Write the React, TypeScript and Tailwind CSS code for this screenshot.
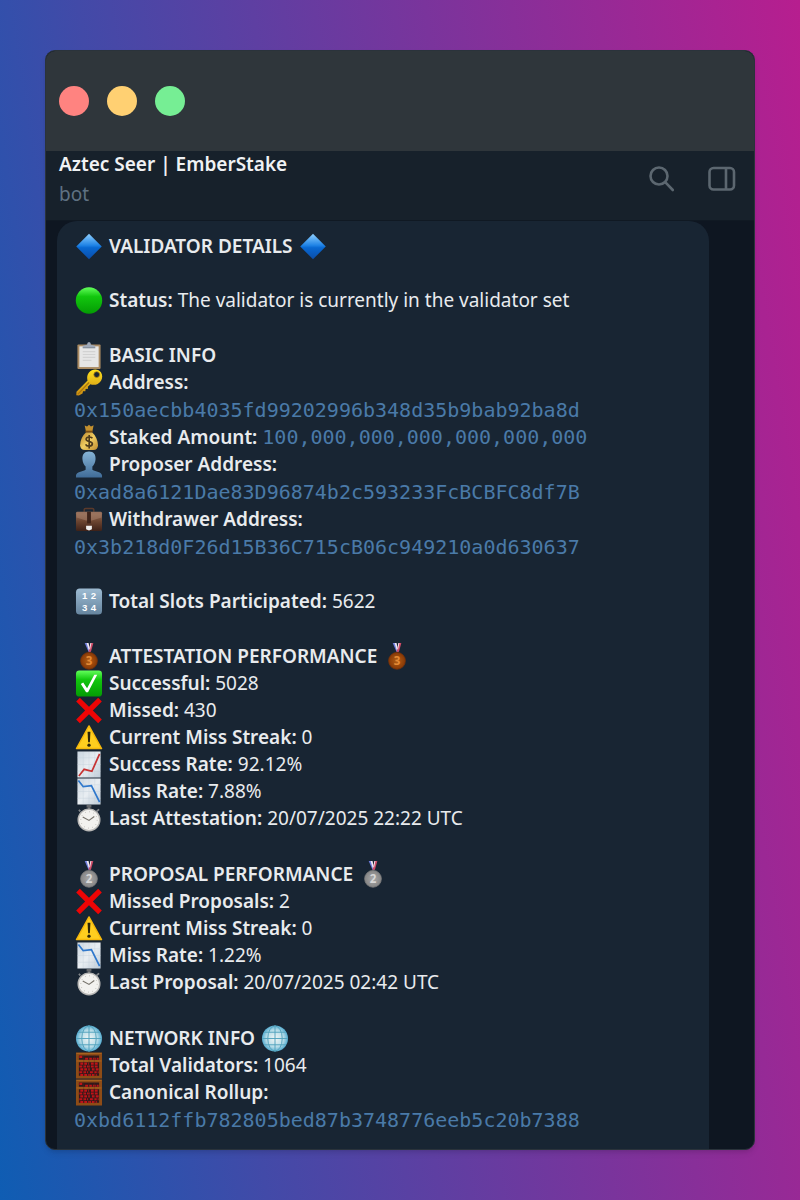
import type { ReactNode } from "react";

function IconDefs() {
  return (
    <svg className="absolute h-0 w-0" aria-hidden="true">
      <defs>
        <linearGradient id="blue" x1="0" y1="0" x2="0" y2="1">
          <stop offset="0" stopColor="#8fd0ff" />
          <stop offset="0.45" stopColor="#2084e6" />
          <stop offset="0.55" stopColor="#0868d2" />
          <stop offset="1" stopColor="#0b4da8" />
        </linearGradient>
        <linearGradient id="green" x1="0" y1="0" x2="0" y2="1">
          <stop offset="0" stopColor="#63ff5c" />
          <stop offset="0.35" stopColor="#12c70e" />
          <stop offset="1" stopColor="#049b04" />
        </linearGradient>
        <linearGradient id="gold" x1="0" y1="0" x2="0" y2="1">
          <stop offset="0" stopColor="#ffe21f" />
          <stop offset="1" stopColor="#c88a12" />
        </linearGradient>
        <linearGradient id="bag" x1="0" y1="0" x2="1" y2="1">
          <stop offset="0" stopColor="#b98228" />
          <stop offset="0.5" stopColor="#f0cd62" />
          <stop offset="1" stopColor="#c08c30" />
        </linearGradient>
        <linearGradient id="steel" x1="0" y1="0" x2="0" y2="1">
          <stop offset="0" stopColor="#86b4d6" />
          <stop offset="1" stopColor="#406c98" />
        </linearGradient>
        <linearGradient id="leather" x1="0" y1="0" x2="0" y2="1">
          <stop offset="0" stopColor="#9a7460" />
          <stop offset="0.5" stopColor="#6b4430" />
          <stop offset="1" stopColor="#3d2118" />
        </linearGradient>
        <linearGradient id="slate" x1="0" y1="0" x2="0" y2="1">
          <stop offset="0" stopColor="#9dbbd2" />
          <stop offset="1" stopColor="#66859f" />
        </linearGradient>
        <linearGradient id="paper" x1="0" y1="0" x2="1" y2="1">
          <stop offset="0" stopColor="#cbd6e0" />
          <stop offset="0.5" stopColor="#e9eef2" />
          <stop offset="1" stopColor="#bfccd8" />
        </linearGradient>
        <radialGradient id="bronze">
          <stop offset="0" stopColor="#b45f14" />
          <stop offset="1" stopColor="#873806" />
        </radialGradient>
        <radialGradient id="silver">
          <stop offset="0" stopColor="#aaaaaa" />
          <stop offset="1" stopColor="#858585" />
        </radialGradient>
        <radialGradient id="globe">
          <stop offset="0" stopColor="#f1f5f4" />
          <stop offset="0.65" stopColor="#b9dde8" />
          <stop offset="1" stopColor="#55acd0" />
        </radialGradient>
      </defs>
    </svg>
  );
}

function Icon({ children }: { children: ReactNode }) {
  return (
    <svg viewBox="0 0 28 28" className="h-[27px] w-7 shrink-0" aria-hidden="true">
      {children}
    </svg>
  );
}

const Diamond = () => (
  <Icon>
    <path d="M14 0.8 27.2 14 14 27.2 0.8 14Z" fill="url(#blue)" />
  </Icon>
);

const GreenDot = () => (
  <Icon>
    <circle cx="14" cy="14" r="13.7" fill="url(#green)" />
  </Icon>
);

const Clipboard = () => (
  <Icon>
    <rect x="2" y="2.5" width="24" height="25.5" rx="1" fill="#a98a62" />
    <rect x="4" y="4.5" width="20" height="21.5" fill="#e6e6e6" />
    <path d="M7.5 10h13M7.5 13h13M7.5 16h13M7.5 19h9" stroke="#d2d2d2" strokeWidth="1.2" />
    <path d="M7.5 6V3.8L12 2.8Q12 0 14 0T16 2.8L20.500 3.8V6Z" fill="#9fa9b8" />
    <path d="M7.500 6h13" stroke="#75808f" />
  </Icon>
);

const Key = () => (
  <Icon>
    <path
      d="M14 3.500C17-.5 24-.5 26.500 3.500S27.500 13.500 23 15.500C20.500 16.700 17.500 16.500 15.500 15.800L12.800 18.500 13 20.500 10.500 20.800 10.200 23 7.800 23.200 7.300 25.500 3.500 27.500 0.800 27.300 1 23.500 12.500 11.800C11.700 9 12 6 14 3.500Z"
      fill="url(#gold)"
    />
    <path d="M2.500 26 14 14" stroke="#a87410" strokeWidth="1.2" />
    <circle cx="22" cy="5.800" r="3" fill="#182533" stroke="#b68710" strokeWidth="0.800" />
  </Icon>
);

const MoneyBag = () => (
  <Icon>
    <path d="M9.500 1.500 12 2.500 14 .8 16 2.500 18.800 1.200 17.500 7.500H10.800Z" fill="#c4912f" />
    <path d="M11 8.500C7 12 4.800 17 4.800 22Q4.800 27 10 27H18.500Q23.300 27 23.300 22C23.300 17 21 12 17.200 8.500Z" fill="url(#bag)" />
    <path d="M10.300 7.800h7.500" stroke="#7b4d12" strokeWidth="1.800" />
    <path
      d="M17.500 14.800C16.500 13 11.200 12.700 11 15.700 11 18.500 17.500 17.500 17.500 20.600 17.300 23.800 11.500 23.500 10.500 21.200M14.200 11.500v14"
      fill="none"
      stroke="#4f3b1c"
      strokeWidth="1.700"
    />
  </Icon>
);

const Person = () => (
  <Icon>
    <path
      d="M14 .5C9 .5 6.800 4 7.200 8.500 7.400 12 8.800 14.500 10.500 16V19.500C7 21.500 1 21.500.5 25.500V27.500H27.500V25.500C27 21.500 21 21.500 17.500 19.500V16C19.200 14.500 20.600 12 20.800 8.500 21.200 4 19 .5 14 .5Z"
      fill="url(#steel)"
    />
  </Icon>
);

const Briefcase = () => (
  <Icon>
    <path d="M9 6V4Q9 2.500 10.500 2.500H17.500Q19 2.500 19 4V6" fill="none" stroke="#5b3a2b" strokeWidth="1.500" />
    <rect x="0.500" y="6" width="27" height="20" rx="1.500" fill="url(#leather)" />
    <path d="M1 7.500H27V12L17 15H11L1 12Z" fill="#a37c66" opacity="0.600" />
    <path d="M12 6h4v12h-4Z" fill="#3f241a" />
    <path d="M11 20.500h6V24L14 25.500 11 24Z" fill="#eeeeee" />
  </Icon>
);

const Numbers = () => (
  <Icon>
    <rect x="0.500" y="0.500" width="27" height="27" rx="4" fill="url(#slate)" />
    <g fill="#ffffff" fontFamily="'Liberation Sans', sans-serif" fontSize="10" fontWeight="700" textAnchor="middle">
      <text x="9.500" y="11">1</text>
      <text x="18.500" y="11">2</text>
      <text x="9.500" y="24">3</text>
      <text x="18.500" y="24">4</text>
    </g>
  </Icon>
);

function Medal({ place }: { place: 2 | 3 }) {
  const bronze = place === 3;
  return (
    <Icon>
      <path d="M9.500 0h3.500l2.500 9h-2Z" fill="#6f7ee0" />
      <path d="M11.500 0h2l1.500 7-1 1Z" fill="#f0e9f0" />
      <path d="M18.500 0h-3l-2 9h2.500Z" fill="#cf4c68" />
      <path d="M16.500 0h-1l-1.300 6 .8 1Z" fill="#f0e9f0" />
      <circle
        cx="14"
        cy="18.500"
        r="8.700"
        fill={bronze ? "url(#bronze)" : "url(#silver)"}
        stroke={bronze ? "#7a3206" : "#7d7d7d"}
        strokeWidth="0.800"
      />
      <text
        x="14"
        y="23"
        fontSize="12"
        fontWeight="700"
        textAnchor="middle"
        fontFamily="'Noto Sans', sans-serif"
        fill={bronze ? "#e58a35" : "#d8d8d8"}
      >
        {place}
      </text>
    </Icon>
  );
}

const Check = () => (
  <Icon>
    <rect x="0.500" y="0.500" width="27" height="27" rx="3.500" fill="url(#green)" />
    <path d="M5.500 14.500 8 13 12 19 19.500 4.800 22.500 4.800 13 23H11Z" fill="#ffffff" />
  </Icon>
);

const Cross = () => (
  <Icon>
    <path d="M4.500.8 14 10 23.500.8 27.300 4.600 18 14 27.300 23.400 23.500 27.200 14 18 4.500 27.200.7 23.400 10 14 .7 4.600Z" fill="#ee0505" />
  </Icon>
);

const Warning = () => (
  <Icon>
    <path d="M14 2 27 25.500H1Z" fill="#ffce1f" stroke="#f5b80c" strokeWidth="1.500" strokeLinejoin="round" />
    <path d="M12.500 8h3l-.6 11h-1.800Z" fill="#2b2508" />
    <circle cx="14" cy="22" r="1.700" fill="#2b2508" />
  </Icon>
);

function Chart({ up }: { up?: boolean }) {
  return (
    <Icon>
      <rect x="2" y="0.500" width="24" height="27" fill="url(#paper)" />
      <path d="M8 1v26M14 1v26M20 1v26M2 7h24M2 14h24M2 21h24" stroke="#c3cfda" strokeWidth="0.400" />
      <path
        d={up ? "M3.500 26 9 19 17 21 25 3" : "M3 2.500 8 9 16.500 8 25 25"}
        fill="none"
        stroke={up ? "#c73333" : "#2f78cc"}
        strokeWidth="1.800"
      />
    </Icon>
  );
}

const Stopwatch = () => (
  <Icon>
    <path d="M11.500 0h5v2.500h-1.200V5h-2.600V2.500h-1.200Z" fill="#65686c" />
    <path d="M22 6.500 24.500 4.500M5 6.500 3.500 5" stroke="#83878b" strokeWidth="1.800" />
    <circle cx="14" cy="15.500" r="11.200" fill="#f3f2ef" stroke="#b9b8b6" strokeWidth="1.500" />
    <circle cx="14" cy="15.500" r="8.500" fill="none" stroke="#aaa69f" strokeDasharray="0.700 3.750" />
    <path d="M7.500 12.500 14 16 19.500 12" fill="none" stroke="#77736b" strokeWidth="1.200" />
  </Icon>
);

const Globe = () => (
  <Icon>
    <circle cx="14" cy="14" r="13.500" fill="url(#globe)" />
    <g fill="none" stroke="#54a3bd" strokeWidth="1">
      <ellipse cx="14" cy="14" rx="7.500" ry="13" />
      <path d="M14 .5v27M.5 14h27M2.800 7.500h22.400M2.800 20.500h22.400" />
    </g>
  </Icon>
);

const Abacus = () => (
  <Icon>
    <rect x="0.500" y="0.500" width="27" height="27" fill="#8e4c16" />
    <path d="M3.500 3.500h21v4.500h-21ZM3.500 10.500h21v14h-21Z" fill="#30191b" />
    <g stroke="#c01218" strokeWidth="2.200" strokeDasharray="3 1">
      <path d="M4 5h4M10 7h14M5 12h9M16 12h7M4 15h20M5 18h10M17 18h7M4 21h9M15 21h9M5 23.800h17" />
    </g>
    <path d="M8.500 4v21M14 4v21M19.500 4v21" stroke="#4c2118" strokeWidth="0.700" />
    <path d="M1 1.500h26M1 9.300h26" stroke="#aa6420" />
  </Icon>
);

function Heading({ icon, trailing, children }: { icon: ReactNode; trailing?: ReactNode; children: ReactNode }) {
  return (
    <h2 className="flex items-center gap-1.5 pl-px font-semibold leading-7">
      {icon}
      {children}
      {trailing}
    </h2>
  );
}

function Row({ icon, label, children }: { icon: ReactNode; label: string; children?: ReactNode }) {
  return (
    <div className="flex items-center gap-1.5 pl-px">
      {icon}
      <p>
        <strong className="font-semibold">{label}:</strong> {children}
      </p>
    </div>
  );
}

function Hash({ children }: { children: string }) {
  return (
    <code className="block break-all font-['DejaVu_Sans_Mono',monospace] text-xl leading-7 text-[#4a7aa8]">
      {children}
    </code>
  );
}

function TitleBar() {
  return (
    <div className="flex h-[100px] items-center gap-[18px] bg-[#2f363b] px-[13px]">
      <span className="size-[30px] rounded-full bg-[#ff8380]" />
      <span className="size-[30px] rounded-full bg-[#ffd072]" />
      <span className="size-[30px] rounded-full bg-[#76ee94]" />
    </div>
  );
}

function ChatHeader() {
  return (
    <header className="flex items-start justify-between border-b border-[#101923] bg-[#17212b] pb-[9px] pl-[13px] pr-[18px]">
      <div>
        <h1 className="text-[19px] font-semibold leading-[27px] text-[#f0f2f4]">Aztec Seer | EmberStake</h1>
        <p className="text-[19px] leading-[33px] text-[#5f7182]">bot</p>
      </div>
      <div className="flex gap-8 pt-3.5 text-[#5c6770]">
        <button type="button" aria-label="Search">
          <svg viewBox="0 0 28 28" className="size-7" fill="none" stroke="currentColor" strokeWidth="2.600">
            <circle cx="11" cy="11" r="8.500" />
            <path d="m17.200 17.200 7.600 7.800" strokeLinecap="round" />
          </svg>
        </button>
        <button type="button" aria-label="Toggle side panel">
          <svg viewBox="0 0 28 28" className="size-7" fill="none" stroke="currentColor" strokeWidth="2.600">
            <rect x="1.500" y="3" width="24.500" height="21.500" rx="4" />
            <path d="M18 3v21.500" />
          </svg>
        </button>
      </div>
    </header>
  );
}

export default function App() {
  return (
    <div className="min-h-screen bg-[linear-gradient(81deg,#0f5db3_0%,#424aa8_27%,#7a349c_62%,#b71e8f_100%)] px-[45px] py-[50px] font-['Noto_Sans',sans-serif]">
      <IconDefs />
      <div className="overflow-hidden rounded-[10px] border border-[#2a333b] bg-[#0e1621] shadow-md">
        <TitleBar />
        <ChatHeader />
        <main className="pl-[11px] pr-[45px]">
          <article className="rounded-t-[20px] bg-[#182533] px-[17px] pb-[15px] pt-[11px] text-[19px] leading-[27px] text-[#e8ebee]">
            <Heading icon={<Diamond />} trailing={<Diamond />}>VALIDATOR DETAILS</Heading>

            <section className="mt-[27px]">
              <Row icon={<GreenDot />} label="Status">The validator is currently in the validator set</Row>
            </section>

            <section className="mt-[27px]">
              <Heading icon={<Clipboard />}>BASIC INFO</Heading>
              <Row icon={<Key />} label="Address" />
              <Hash>0x150aecbb4035fd99202996b348d35b9bab92ba8d</Hash>
              <Row icon={<MoneyBag />} label="Staked Amount">
                <code className="font-['DejaVu_Sans_Mono',monospace] text-xl leading-none text-[#4a7aa8]">
                  100,000,000,000,000,000,000
                </code>
              </Row>
              <Row icon={<Person />} label="Proposer Address" />
              <Hash>0xad8a6121Dae83D96874b2c593233FcBCBFC8df7B</Hash>
              <Row icon={<Briefcase />} label="Withdrawer Address" />
              <Hash>0x3b218d0F26d15B36C715cB06c949210a0d630637</Hash>
            </section>

            <section className="mt-[27px]">
              <Row icon={<Numbers />} label="Total Slots Participated">5622</Row>
            </section>

            <section className="mt-[27px]">
              <Heading icon={<Medal place={3} />} trailing={<Medal place={3} />}>ATTESTATION PERFORMANCE</Heading>
              <Row icon={<Check />} label="Successful">5028</Row>
              <Row icon={<Cross />} label="Missed">430</Row>
              <Row icon={<Warning />} label="Current Miss Streak">0</Row>
              <Row icon={<Chart up />} label="Success Rate">92.12%</Row>
              <Row icon={<Chart />} label="Miss Rate">7.88%</Row>
              <Row icon={<Stopwatch />} label="Last Attestation">20/07/2025 22:22 UTC</Row>
            </section>

            <section className="mt-7">
              <Heading icon={<Medal place={2} />} trailing={<Medal place={2} />}>PROPOSAL PERFORMANCE</Heading>
              <Row icon={<Cross />} label="Missed Proposals">2</Row>
              <Row icon={<Warning />} label="Current Miss Streak">0</Row>
              <Row icon={<Chart />} label="Miss Rate">1.22%</Row>
              <Row icon={<Stopwatch />} label="Last Proposal">20/07/2025 02:42 UTC</Row>
            </section>

            <section className="mt-7">
              <Heading icon={<Globe />} trailing={<Globe />}>NETWORK INFO</Heading>
              <Row icon={<Abacus />} label="Total Validators">1064</Row>
              <Row icon={<Abacus />} label="Canonical Rollup" />
              <Hash>0xbd6112ffb782805bed87b3748776eeb5c20b7388</Hash>
            </section>
          </article>
        </main>
      </div>
    </div>
  );
}
